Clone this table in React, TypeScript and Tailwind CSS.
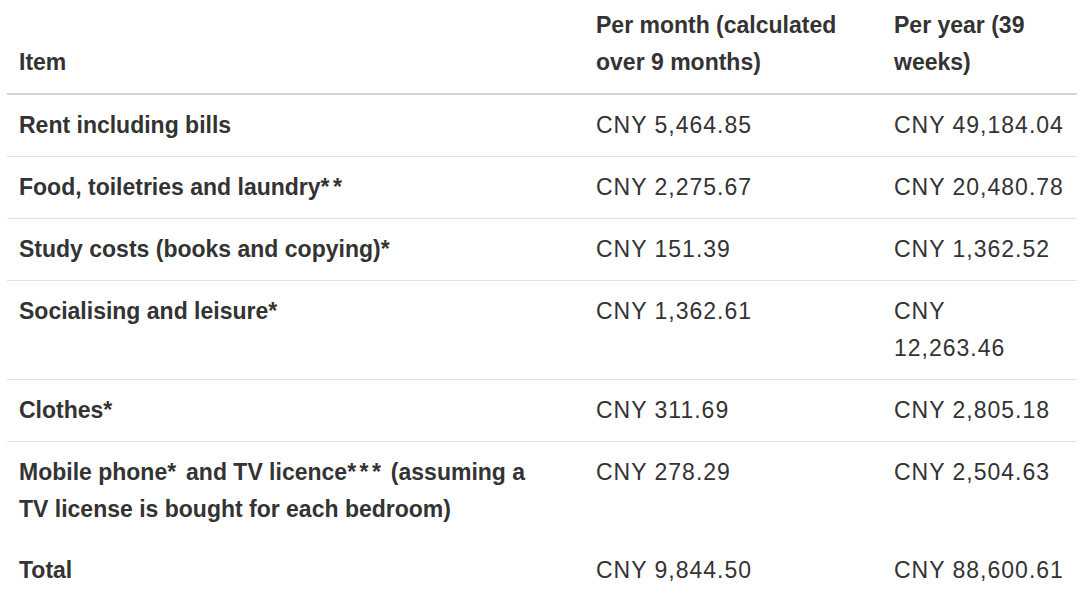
import type { ReactNode } from 'react';

// asterisks in the source font sit wider apart than Arial's
function stars(text: string) {
  return text.split(/(\*+)/).map((part, i) =>
    part.startsWith('*') ? (
      <span key={i} className="tracking-[3.5px]">
        {part}
      </span>
    ) : (
      part
    )
  );
}

type Row = { item: ReactNode; month: string; year: ReactNode; last?: boolean };

const rows: Row[] = [
  { item: 'Rent including bills', month: 'CNY 5,464.85', year: 'CNY 49,184.04' },
  { item: stars('Food, toiletries and laundry**'), month: 'CNY 2,275.67', year: 'CNY 20,480.78' },
  { item: stars('Study costs (books and copying)*'), month: 'CNY 151.39', year: 'CNY 1,362.52' },
  {
    item: stars('Socialising and leisure*'),
    month: 'CNY 1,362.61',
    year: (
      <>
        CNY
        <br />
        12,263.46
      </>
    ),
  },
  { item: stars('Clothes*'), month: 'CNY 311.69', year: 'CNY 2,805.18' },
  {
    item: (
      <>
        {stars('Mobile phone* and TV licence*** (assuming a')}
        <br />
        TV license is bought for each bedroom)
      </>
    ),
    month: 'CNY 278.29',
    year: 'CNY 2,504.63',
    last: true,
  },
  { item: 'Total', month: 'CNY 9,844.50', year: 'CNY 88,600.61', last: true },
];

export default function App() {
  return (
    <div
      className="w-[1080px] h-[597px] overflow-hidden bg-white pl-[7px] text-[#333333]"
      style={{ fontFamily: '"Liberation Sans", Arial, sans-serif' }}
    >
      <table className="w-[1070px] table-fixed border-collapse text-[23px] leading-[37px]">
        <colgroup>
          <col className="w-[577px]" />
          <col className="w-[298px]" />
          <col className="w-[195px]" />
        </colgroup>
        <thead>
          <tr className="border-b-2 border-[#d6d6d6]">
            <th className="px-3 pt-[7px] pb-3 text-left align-bottom font-bold">Item</th>
            <th className="px-3 pt-[7px] pb-3 text-left align-bottom font-bold">
              Per month (calculated over 9 months)
            </th>
            <th className="px-3 pt-[7px] pb-3 text-left align-bottom font-bold">Per year (39 weeks)</th>
          </tr>
        </thead>
        <tbody>
          {rows.map((r, i) => (
            <tr key={i} className={r.last ? '' : 'border-b border-[#e2e2e2]'}>
              <td className="px-3 py-3 align-top font-bold">{r.item}</td>
              <td className="px-3 py-3 align-top tracking-[1px]">{r.month}</td>
              <td className="px-3 py-3 align-top tracking-[1px]">{r.year}</td>
            </tr>
          ))}
        </tbody>
      </table>
    </div>
  );
}
